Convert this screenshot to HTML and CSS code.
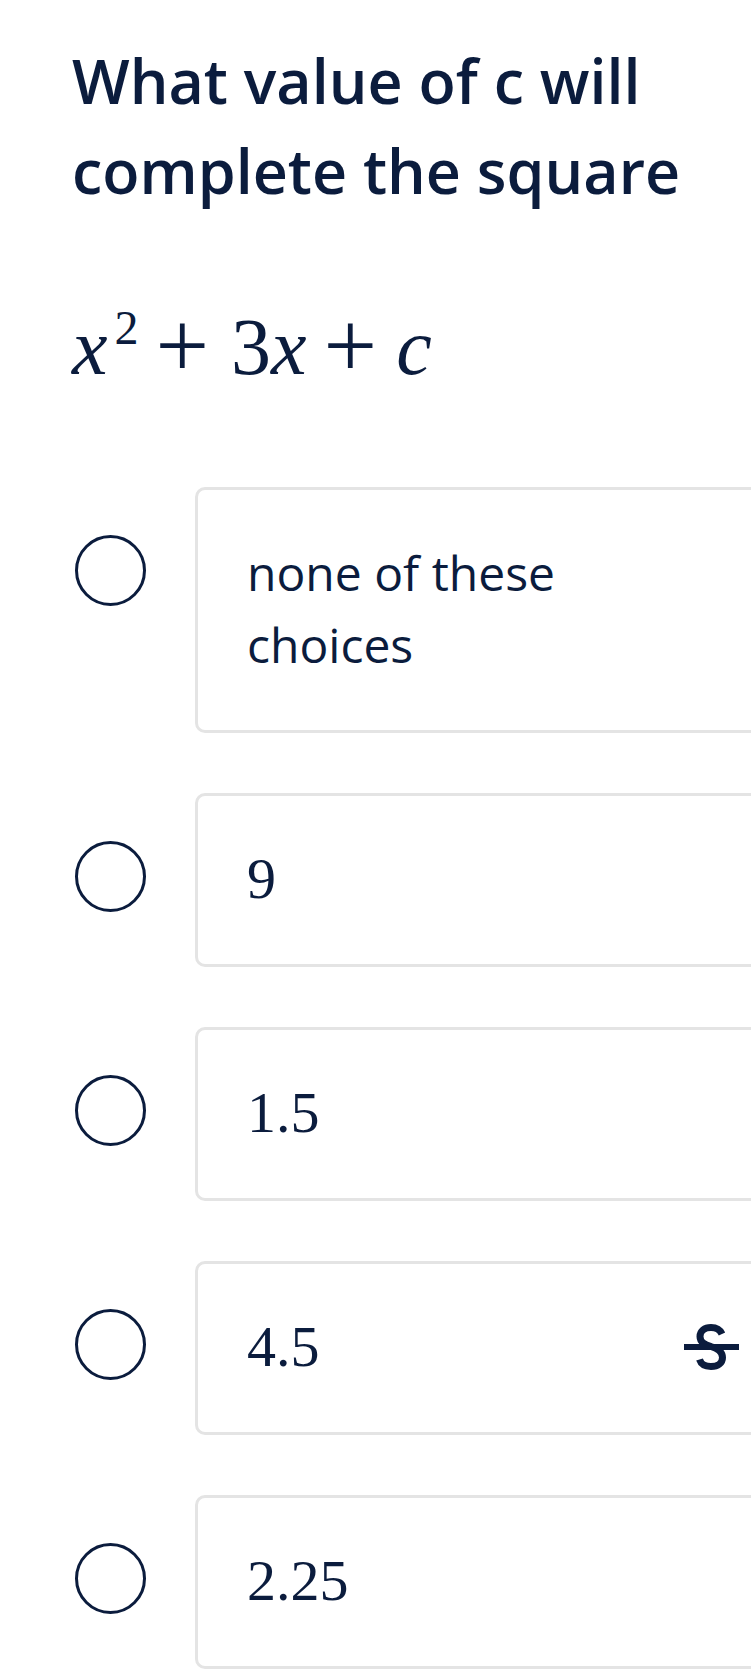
FILE: index.html
```html
<!DOCTYPE html>
<html lang="en">
<head>
<meta charset="utf-8">
<title>Complete the square</title>
<link rel="stylesheet" href="styles.css">
</head>
<body>
<main class="page">
  <h1 class="question">What value of c will complete the square</h1>
  <div class="expr"><span class="mi">x</span><span class="sup">2</span><span class="mo">+</span><span class="mn">3</span><span class="mi">x</span><span class="mo">+</span><span class="mi mi-last">c</span></div>
  <ul class="options">
    <li class="option">
      <span class="radio"></span>
      <div class="choice"><span class="choice-text">none of these<br>choices</span></div>
    </li>
    <li class="option">
      <span class="radio"></span>
      <div class="choice"><span class="choice-math">9</span></div>
    </li>
    <li class="option">
      <span class="radio"></span>
      <div class="choice"><span class="choice-math">1.5</span></div>
    </li>
    <li class="option">
      <span class="radio"></span>
      <div class="choice">
        <span class="choice-math">4.5</span>
        <svg class="strike-icon" width="55" height="46" viewBox="0 0 55 46" aria-label="eliminate">
          <path d="M38 10 C36 5.5 32 3.5 27 3.5 C20.5 3.5 16 7 16 12.5 C16 18.5 21 20.5 27 22.5 C33.5 24.5 38.5 27 38.5 33.5 C38.5 39 34 42.5 27 42.5 C21 42.5 17 40 15.5 35.5" fill="none" stroke="#0b1c3d" stroke-width="7" stroke-linecap="butt"/>
          <rect x="0" y="20" width="55" height="6" fill="#0b1c3d"/>
        </svg>
      </div>
    </li>
    <li class="option">
      <span class="radio"></span>
      <div class="choice"><span class="choice-math">2.25</span></div>
    </li>
  </ul>
</main>
</body>
</html>
```

FILE: styles.css
```css
html, body {
  margin: 0;
  padding: 0;
  background: #ffffff;
  overflow: hidden;
}

.page {
  width: 679px;
  padding: 36px 0 0 72px;
  color: #0b1c3d;
}

.question {
  margin: 0;
  font-family: "Open Sans", "Liberation Sans", sans-serif;
  font-weight: 600;
  font-size: 61px;
  line-height: 90px;
}

.expr {
  margin-top: 83px;
  font-family: "Liberation Serif", serif;
  font-size: 80px;
  line-height: 96px;
  height: 96px;
  white-space: nowrap;
}

.mi {
  font-style: italic;
}

.mi-last {
  margin-left: -3px;
}

.sup {
  font-size: 48px;
  line-height: 0;
  vertical-align: 30px;
  margin-left: 7px;
}

.mo {
  font-size: 95px;
  line-height: 0;
  vertical-align: -3px;
  margin: 0 22px 0 17px;
}

.options {
  list-style: none;
  margin: 92px 0 0 0;
  padding: 0;
  display: flex;
  flex-direction: column;
  gap: 60px;
}

.option {
  display: flex;
  align-items: flex-start;
}

.radio {
  flex: none;
  width: 65px;
  height: 65px;
  border: 3px solid #0b1c3d;
  border-radius: 50%;
  margin: 48px 0 0 3px;
}

.choice {
  flex: none;
  box-sizing: border-box;
  width: 600px;
  margin-left: 49px;
  border: 3px solid #e4e4e4;
  border-radius: 10px;
  padding: 47px 53px 49px 49px;
  display: flex;
  align-items: center;
  justify-content: space-between;
}

.choice-text {
  font-family: "Open Sans", "Liberation Sans", sans-serif;
  font-size: 48px;
  line-height: 72px;
}

.choice-math {
  font-family: "Liberation Serif", serif;
  font-size: 58px;
  line-height: 72px;
}

.strike-icon {
  flex: none;
  display: block;
}
```
